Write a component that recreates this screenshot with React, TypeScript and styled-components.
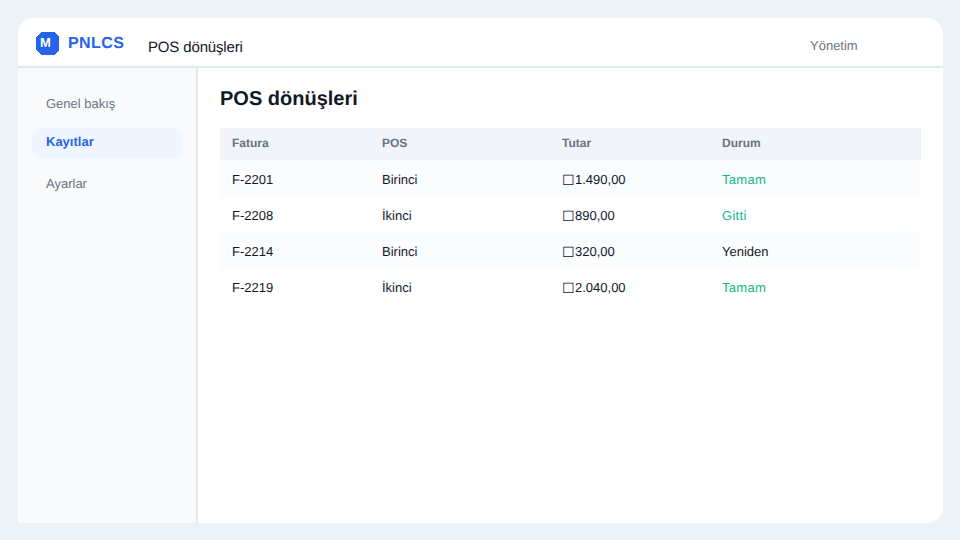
import React from 'react'
import styled, { createGlobalStyle } from 'styled-components'

const GlobalStyle = createGlobalStyle`
  html, body {
    margin: 0;
    padding: 0;
    background: #edf2f7;
    font-family: 'Liberation Sans', Arial, sans-serif;
    text-rendering: geometricPrecision;
  }
`

const Page = styled.div`
  width: 960px;
  height: 540px;
  box-sizing: border-box;
  padding: 18px 17px 17px 18px;
  overflow: hidden;
`

const Card = styled.div`
  height: 100%;
  display: flex;
  flex-direction: column;
  background: #fff;
  border-radius: 16px 16px 16px 0;
`

const TopBar = styled.header`
  height: 50px;
  flex: none;
  box-sizing: border-box;
  display: flex;
  align-items: center;
  padding: 0 18px;
  border-bottom: 2px solid #e2e8f0;
`

const Logo = styled.div`
  display: flex;
  align-items: center;
  gap: 9px;
  width: 112px;
  padding-top: 3px;
`

const LogoMark = styled.svg`
  width: 23px;
  height: 23px;
  flex: none;
`

const LogoLetter = styled.text`
  fill: #fff;
  font-size: 13px;
  font-weight: 700;
`

const LogoText = styled.span`
  color: #2563eb;
  font-size: 16px;
  font-weight: 700;
  letter-spacing: 0.4px;
`

const PageName = styled.span`
  flex: 1;
  color: #111827;
  font-size: 15px;
  letter-spacing: -0.15px;
  padding-top: 10px;
`

const UserName = styled.span`
  width: 115px;
  color: #6b7280;
  font-size: 13px;
  padding-top: 7px;
`

const Body = styled.div`
  flex: 1;
  display: flex;
  min-height: 0;
`

const Sidebar = styled.nav`
  width: 180px;
  flex: none;
  box-sizing: border-box;
  display: flex;
  flex-direction: column;
  gap: 7px;
  padding: 22px 13px 22px 14px;
  background: #f8fafc;
  border-right: 2px solid #e2e8f0;
`

const NavItem = styled.a<{ $active?: boolean }>`
  height: 31px;
  flex: none;
  box-sizing: border-box;
  padding: 6px 14px 0;
  margin-bottom: ${(p) => (p.$active ? 4 : 0)}px;
  border-radius: 10px;
  line-height: 15px;
  font-size: 13px;
  font-weight: ${(p) => (p.$active ? 700 : 400)};
  color: ${(p) => (p.$active ? '#2563eb' : '#6b7280')};
  background: ${(p) => (p.$active ? '#eff6ff' : 'transparent')};
`

const Main = styled.main`
  flex: 1;
  padding: 19px 22px 18px;
`

const Title = styled.h1`
  margin: 0 0 17px;
  height: 24px;
  line-height: 24px;
  color: #111827;
  font-size: 20px;
  font-weight: 700;
`

const Table = styled.div`
  display: flex;
  flex-direction: column;
`

const Row = styled.div<{ $head?: boolean; $striped?: boolean }>`
  display: grid;
  grid-template-columns: 150px 180px 160px 1fr;
  align-items: center;
  box-sizing: border-box;
  height: ${(p) => (p.$head ? 32 : 36)}px;
  padding: ${(p) => (p.$head ? '0 12px 2px' : '4px 12px 0')};
  background: ${(p) => (p.$head ? '#f1f5f9' : p.$striped ? '#fbfcfe' : 'transparent')};
  font-size: 13px;
  line-height: 16px;
  color: #111827;
`

const HeadCell = styled.span`
  color: #6b7280;
  font-size: 12px;
  font-weight: 700;
`

const Amount = styled.span`
  display: flex;
  align-items: center;
`

const Currency = styled.span`
  width: 13px;
  height: 16px;
  flex: none;
  font-size: 14px;
`

const Status = styled.span<{ $done?: boolean }>`
  color: ${(p) => (p.$done ? '#10b981' : '#111827')};
  letter-spacing: ${(p) => (p.$done ? '0.3px' : '0')};
`

const rows = [
  { invoice: 'F-2201', pos: 'Birinci', amount: '1.490,00', status: 'Tamam', done: true },
  { invoice: 'F-2208', pos: 'İkinci', amount: '890,00', status: 'Gitti', done: true },
  { invoice: 'F-2214', pos: 'Birinci', amount: '320,00', status: 'Yeniden', done: false },
  { invoice: 'F-2219', pos: 'İkinci', amount: '2.040,00', status: 'Tamam', done: true },
]

export default function App() {
  return (
    <Page>
      <GlobalStyle />
      <Card>
        <TopBar>
          <Logo>
            <LogoMark viewBox="0 0 23 23" aria-hidden="true">
              <path d="M5 0H18L23 5V18L18 23H5L0 18V5Z" fill="#2563eb" shapeRendering="crispEdges" />
              <LogoLetter x="9.5" y="15" textAnchor="middle">M</LogoLetter>
            </LogoMark>
            <LogoText>PNLCS</LogoText>
          </Logo>
          <PageName>POS dönüşleri</PageName>
          <UserName>Yönetim</UserName>
        </TopBar>
        <Body>
          <Sidebar>
            <NavItem>Genel bakış</NavItem>
            <NavItem $active>Kayıtlar</NavItem>
            <NavItem>Ayarlar</NavItem>
          </Sidebar>
          <Main>
            <Title>POS dönüşleri</Title>
            <Table>
              <Row $head>
                <HeadCell>Fatura</HeadCell>
                <HeadCell>POS</HeadCell>
                <HeadCell>Tutar</HeadCell>
                <HeadCell>Durum</HeadCell>
              </Row>
              {rows.map((row, i) => (
                <Row key={row.invoice} $striped={i % 2 === 0}>
                  <span>{row.invoice}</span>
                  <span>{row.pos}</span>
                  <Amount>
                    <Currency>☐</Currency>
                    {row.amount}
                  </Amount>
                  <Status $done={row.done}>{row.status}</Status>
                </Row>
              ))}
            </Table>
          </Main>
        </Body>
      </Card>
    </Page>
  )
}
